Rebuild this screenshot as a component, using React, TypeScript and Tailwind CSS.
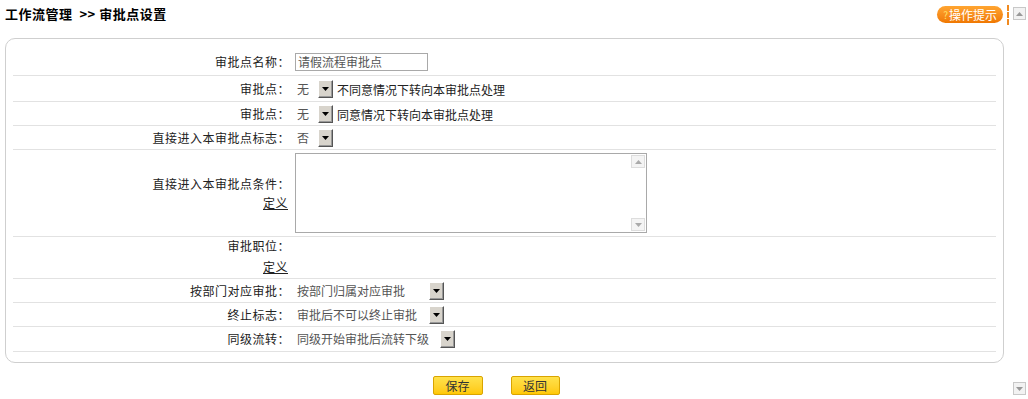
import React from 'react'

const font = { fontFamily: '"Noto Sans CJK SC", "Liberation Sans", sans-serif' }

function DropBtn() {
  return (
    <span className="inline-flex h-[18px] w-[15px] items-center justify-center border border-t-[#fff] border-l-[#fff] border-r-[#555] border-b-[#555] bg-[#d8d4cc] shadow-[inset_-1px_-1px_0_#999]">
      <svg width="7" height="4" viewBox="0 0 7 4"><path d="M0 0h7L3.5 4z" fill="#000" /></svg>
    </span>
  )
}

function Select({ value, width }: { value: string; width: number }) {
  return (
    <span className="inline-flex items-center" style={{ width }}>
      <span className="flex-1 pl-[2px] text-[#555]">{value}</span>
      <DropBtn />
    </span>
  )
}

function Row({ label, children, h, top, link }: { label: string; children?: React.ReactNode; h: string; top?: boolean; link?: boolean }) {
  return (
    <div className={`flex border-b border-[#e2e2e2] ${h} ${top ? 'items-start' : 'items-center'}`}>
      <div className="w-[277px] shrink-0 text-right tracking-[0.5px] text-[#222]">
        <div>{label}</div>
        {link && <div className="mt-[5px] pr-[2px] underline">定义</div>}
      </div>
      <div className="ml-[5px] flex items-center text-[#222]">{children}</div>
    </div>
  )
}

export default function App() {
  return (
    <div className="relative h-[399px] w-[1028px] overflow-hidden bg-white text-[12px] leading-[16px]" style={font}>
      {/* header */}
      <div className="flex h-[30px] items-start justify-between pl-[5px] pr-[25px] pt-[6px]">
        <div className="text-[13px] font-bold tracking-[0.5px] text-black">工作流管理&nbsp;&nbsp;&gt;&gt;&nbsp;审批点设置</div>
        <div className="flex h-[17px] items-center rounded-full bg-gradient-to-b from-[#ffa530] to-[#f07800] px-[6px] text-white">
          <span className="mr-[1px] text-[10px] text-[#ffe066]">?</span>操作提示
        </div>
      </div>

      {/* right strip */}
      <div className="absolute right-[2px] top-[7px] flex h-[13px] w-[13px] items-center justify-center border border-[#c8c8c8] bg-[#f2f2f2]">
        <svg width="7" height="4" viewBox="0 0 7 4"><path d="M0 4h7L3.5 0z" fill="#999" /></svg>
      </div>
      <div className="absolute right-[19px] top-[5px] h-[20px] border-l-2 border-dashed border-[#f08a20]" />
      <div className="absolute bottom-[4px] right-[2px] flex h-[13px] w-[13px] items-center justify-center border border-[#c8c8c8] bg-[#f2f2f2]">
        <svg width="7" height="4" viewBox="0 0 7 4"><path d="M0 0h7L3.5 4z" fill="#999" /></svg>
      </div>

      {/* panel */}
      <div className="ml-[5px] mt-[8px] h-[325px] w-[999px] rounded-[10px] border border-[#cfcfcf] px-[7px] pt-[10px]">
        <Row label="审批点名称：" h="h-[27px]">
          <span className="inline-flex h-[18px] w-[133px] items-center border border-[#a9a9a9] px-[2px] text-[#555]">请假流程审批点</span>
        </Row>
        <Row label="审批点：" h="h-[26px]">
          <Select value="无" width={38} />
          <span className="ml-[4px] mt-[2px]">不同意情况下转向本审批点处理</span>
        </Row>
        <Row label="审批点：" h="h-[24px]">
          <Select value="无" width={38} />
          <span className="ml-[4px] mt-[2px]">同意情况下转向本审批点处理</span>
        </Row>
        <Row label="直接进入本审批点标志：" h="h-[24px]">
          <Select value="否" width={38} />
        </Row>
        <div className="flex h-[87px] items-center border-b border-[#e2e2e2]">
          <div className="w-[277px] shrink-0 text-right tracking-[0.5px] text-[#222]">
            <div>直接进入本审批点条件：</div>
            <div className="mt-[3px] pr-[2px] underline">定义</div>
          </div>
          <div className="ml-[5px] flex h-[80px] w-[352px] justify-end border border-[#a9a9a9] p-[1px]">
            <div className="flex w-[14px] flex-col justify-between">
              <span className="flex h-[13px] items-center justify-center border border-[#ddd] bg-[#f4f4f4]">
                <svg width="7" height="4" viewBox="0 0 7 4"><path d="M0 4h7L3.5 0z" fill="#aaa" /></svg>
              </span>
              <span className="flex h-[13px] items-center justify-center border border-[#ddd] bg-[#f4f4f4]">
                <svg width="7" height="4" viewBox="0 0 7 4"><path d="M0 0h7L3.5 4z" fill="#aaa" /></svg>
              </span>
            </div>
          </div>
        </div>
        <Row label="审批职位：" h="h-[42px] pt-[1px]" top link />
        <Row label="按部门对应审批：" h="h-[24px]">
          <Select value="按部门归属对应审批" width={149} />
        </Row>
        <Row label="终止标志：" h="h-[24px]">
          <Select value="审批后不可以终止审批" width={149} />
        </Row>
        <Row label="同级流转：" h="h-[25px]">
          <Select value="同级开始审批后流转下级" width={160} />
        </Row>
      </div>

      {/* buttons */}
      <div className="mt-[13px] flex justify-center gap-[28px] pr-[36px]">
        <button className="h-[19px] w-[50px] rounded-[2px] border border-[#d9a400] bg-gradient-to-b from-[#ffe24a] to-[#ffc800] text-[#333]">保存</button>
        <button className="h-[19px] w-[49px] rounded-[2px] border border-[#d9a400] bg-gradient-to-b from-[#ffe24a] to-[#ffc800] text-[#333]">返回</button>
      </div>
    </div>
  )
}
